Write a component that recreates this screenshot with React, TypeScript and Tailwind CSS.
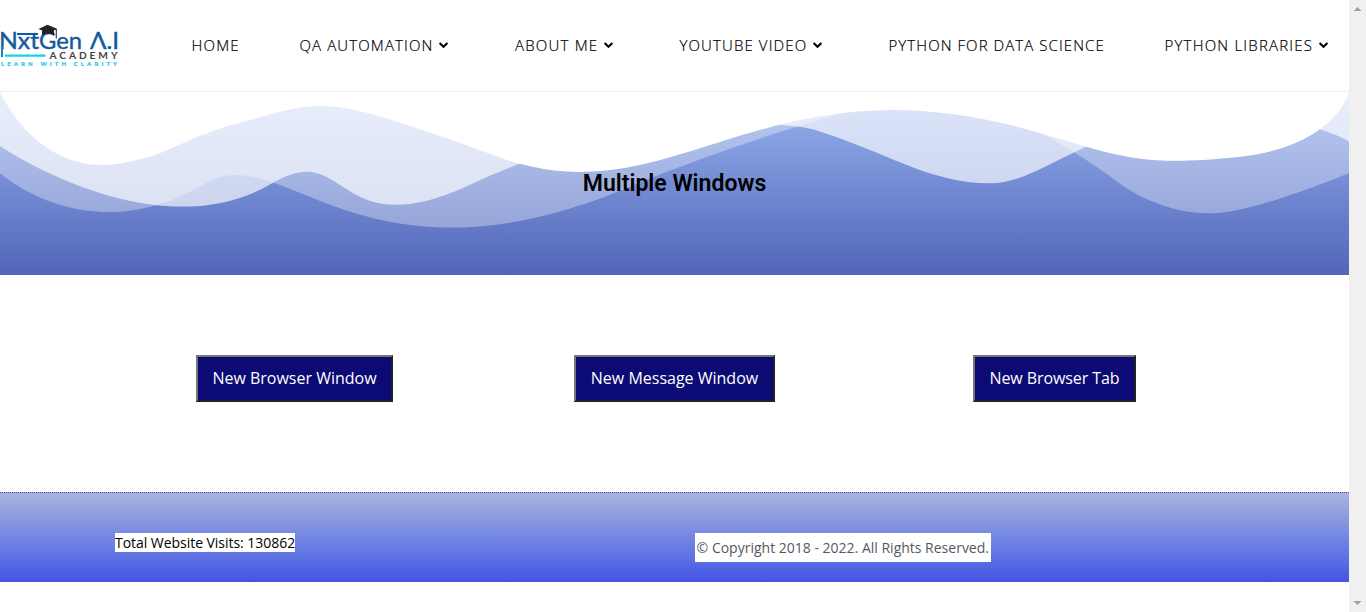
import React from "react";

const NAV: { label: string; menu: boolean; pos: string }[] = [
  { label: "HOME", menu: false, pos: "w-[108px] tracking-[1.2px]" },
  { label: "QA AUTOMATION", menu: true, pos: "w-[215.5px] tracking-[1.12px]" },
  { label: "ABOUT ME", menu: true, pos: "w-[164.5px] tracking-[1.2px]" },
  { label: "YOUTUBE VIDEO", menu: true, pos: "w-[209px] tracking-[1.12px]" },
  { label: "PYTHON FOR DATA SCIENCE", menu: false, pos: "w-[276px] tracking-[1.07px]" },
  { label: "PYTHON LIBRARIES", menu: true, pos: "w-[180px] tracking-[1.2px]" },
];

function Chevron() {
  return (
    <svg className="ml-[5px] h-[8px] w-[11px] shrink-0" viewBox="0 0 11 8" fill="none">
      <path d="M1.6 2 L5.5 5.7 L9.4 2" stroke="#000" strokeWidth="2.1" />
    </svg>
  );
}

function Logo() {
  return (
    <svg className="mb-[3px] block h-[46px] w-[120px] shrink-0" viewBox="0 0 120 46">
      <g fontFamily="Lato, sans-serif" fill="#125a9c" stroke="#125a9c" strokeWidth="0.4">
        <text x="-1" y="28" fontSize="22.5" textLength="40" lengthAdjust="spacingAndGlyphs">Nxt</text>
        <text x="39" y="28" fontSize="22.5" textLength="43" lengthAdjust="spacingAndGlyphs">Gen</text>
        <text x="90" y="28" fontSize="22.5" textLength="29" lengthAdjust="spacingAndGlyphs">Λ.I</text>
      </g>
      <path d="M17 13H38" stroke="#125a9c" strokeWidth="2" />
      <path d="M2 24V36" stroke="#1684bd" strokeWidth="2" />
      <path d="M5 34.6H45.5" stroke="#13d3ee" strokeWidth="2.4" />
      <path d="M38.5 8 L47.5 3.7 L57.5 8 L48 12Z" fill="#222" />
      <path d="M42 9.5V14.2Q48 11.5 54 14.2V9.5Z" fill="#222" />
      <path d="M56.3 8V17.5" stroke="#333" strokeWidth="1.1" />
      <text x="49.5" y="38" fontFamily="Lato, sans-serif" fontWeight="700" fontSize="10.2" fill="#444" textLength="68" lengthAdjust="spacing">ACADEMY</text>
      <text x="1" y="44.7" fontFamily="Lato, sans-serif" fontWeight="900" fontSize="5.9" fill="#24cbea" stroke="#24cbea" strokeWidth="0.2" textLength="116" lengthAdjust="spacing">LEARN WITH CLARITY</text>
    </svg>
  );
}

function Waves() {
  return (
    <svg className="absolute left-0 top-0 block h-[135.6px] w-full" viewBox="0 0 1000 100" preserveAspectRatio="none" fill="#fff">
      <path opacity="0.33" d="M473,67.3c-203.9,88.3-263.1-34-320.3,0C66,119.1,0,59.7,0,59.7V0h1000v59.7c0,0-62.1,26.1-94.9,29.3c-32.8,3.3-62.8-12.3-75.8-22.1C806,49.6,745.3,8.7,694.9,4.7S492.4,59,473,67.3z" />
      <path opacity="0.66" d="M734,67.3c-45.5,0-77.2-23.2-129.1-39.1c-28.6-8.7-150.3-10.1-254,39.1s-91.7-34.4-149.2,0C115.7,118.3,0,39.8,0,39.8V0h1000v36.5c0,0-28.2-18.5-92.1-18.5C810.2,18.1,775.7,67.3,734,67.3z" />
      <path d="M766.1,28.9c-200-57.5-266,65.5-395.1,19.5C242,1.8,242,5.4,184.8,20.6C128,35.8,132.3,44.9,89.9,52.5C28.6,63.7,0,0,0,0h1000c0,0-9.9,40.9-83.6,48.1S829.6,47,766.1,28.9z" />
    </svg>
  );
}

const BUTTON =
  "h-[47px] shrink-0 whitespace-nowrap border-2 border-t-[#767676] border-l-[#767676] border-r-[#212121] border-b-[#212121] bg-[#0c0a74] pb-[2px] text-center text-[16px] leading-[24px] text-white";

export default function App() {
  return (
    <div className="flex h-[612px] w-full overflow-hidden bg-white font-['Open_Sans',sans-serif]">
      <div className="flex w-[1349px] shrink-0 flex-col">
        <header className="flex h-[92px] shrink-0 items-center border-b border-[#f1f1f1]">
          <Logo />
          <nav className="mb-[2px] ml-[71.5px] flex">
            {NAV.map((item) => (
              <a key={item.label} className={`${item.pos} flex shrink-0 items-center whitespace-nowrap text-[15px] font-light leading-[24px] text-black [-webkit-text-stroke:0.2px_#000]`}>
                {item.label}
                {item.menu && <Chevron />}
              </a>
            ))}
          </nav>
        </header>

        <section className="relative flex h-[183px] shrink-0 justify-center bg-gradient-to-b from-[#9ab4ef] to-[#5265b8]">
          <Waves />
          <h1 className="relative mt-[80px] h-6 font-[Roboto,sans-serif] text-[23px] font-semibold leading-[24px] text-black">Multiple Windows</h1>
        </section>

        <main className="flex h-[217px] shrink-0 items-start pl-[196px] pt-[80px]">
          <button className={`${BUTTON} w-[197px]`}>New Browser Window</button>
          <button className={`${BUTTON} ml-[181px] w-[201px]`}>New Message Window</button>
          <button className={`${BUTTON} ml-[198px] w-[163px] tracking-[-0.08px]`}>New Browser Tab</button>
        </main>

        <footer className="flex h-[90px] shrink-0 items-start border-t border-dotted border-[#4054b2] bg-gradient-to-b from-[#abb3dd] to-[#4553e3] bg-origin-border pl-[115px] pt-[40px]">
          <span className="h-[19px] w-[180px] whitespace-nowrap bg-white text-[14px] leading-[19px] tracking-[-0.04px] text-black">Total Website Visits: 130862</span>
          <span className="ml-[400px] h-[29px] w-[296px] whitespace-nowrap bg-white pl-[1.6px] text-[14px] leading-[29px] text-[#54595f]">© Copyright 2018 - 2022. All Rights Reserved.</span>
        </footer>
      </div>

      <div className="flex flex-1 flex-col items-center justify-between bg-[#f0f0f0] pb-[7px] pt-[7px]">
        <svg className="h-1 w-[7px]" viewBox="0 0 7 4" fill="#a3a3a3" shapeRendering="crispEdges">
          <path d="M3 0h1v1h1v1h1v1h1v1H0V3h1V2h1V1h1z" />
        </svg>
        <svg className="h-1 w-[7px]" viewBox="0 0 7 4" fill="#a3a3a3" shapeRendering="crispEdges">
          <path d="M0 0h7v1H6v1H5v1H4v1H3V3H2V2H1V1H0z" />
        </svg>
      </div>
    </div>
  );
}
